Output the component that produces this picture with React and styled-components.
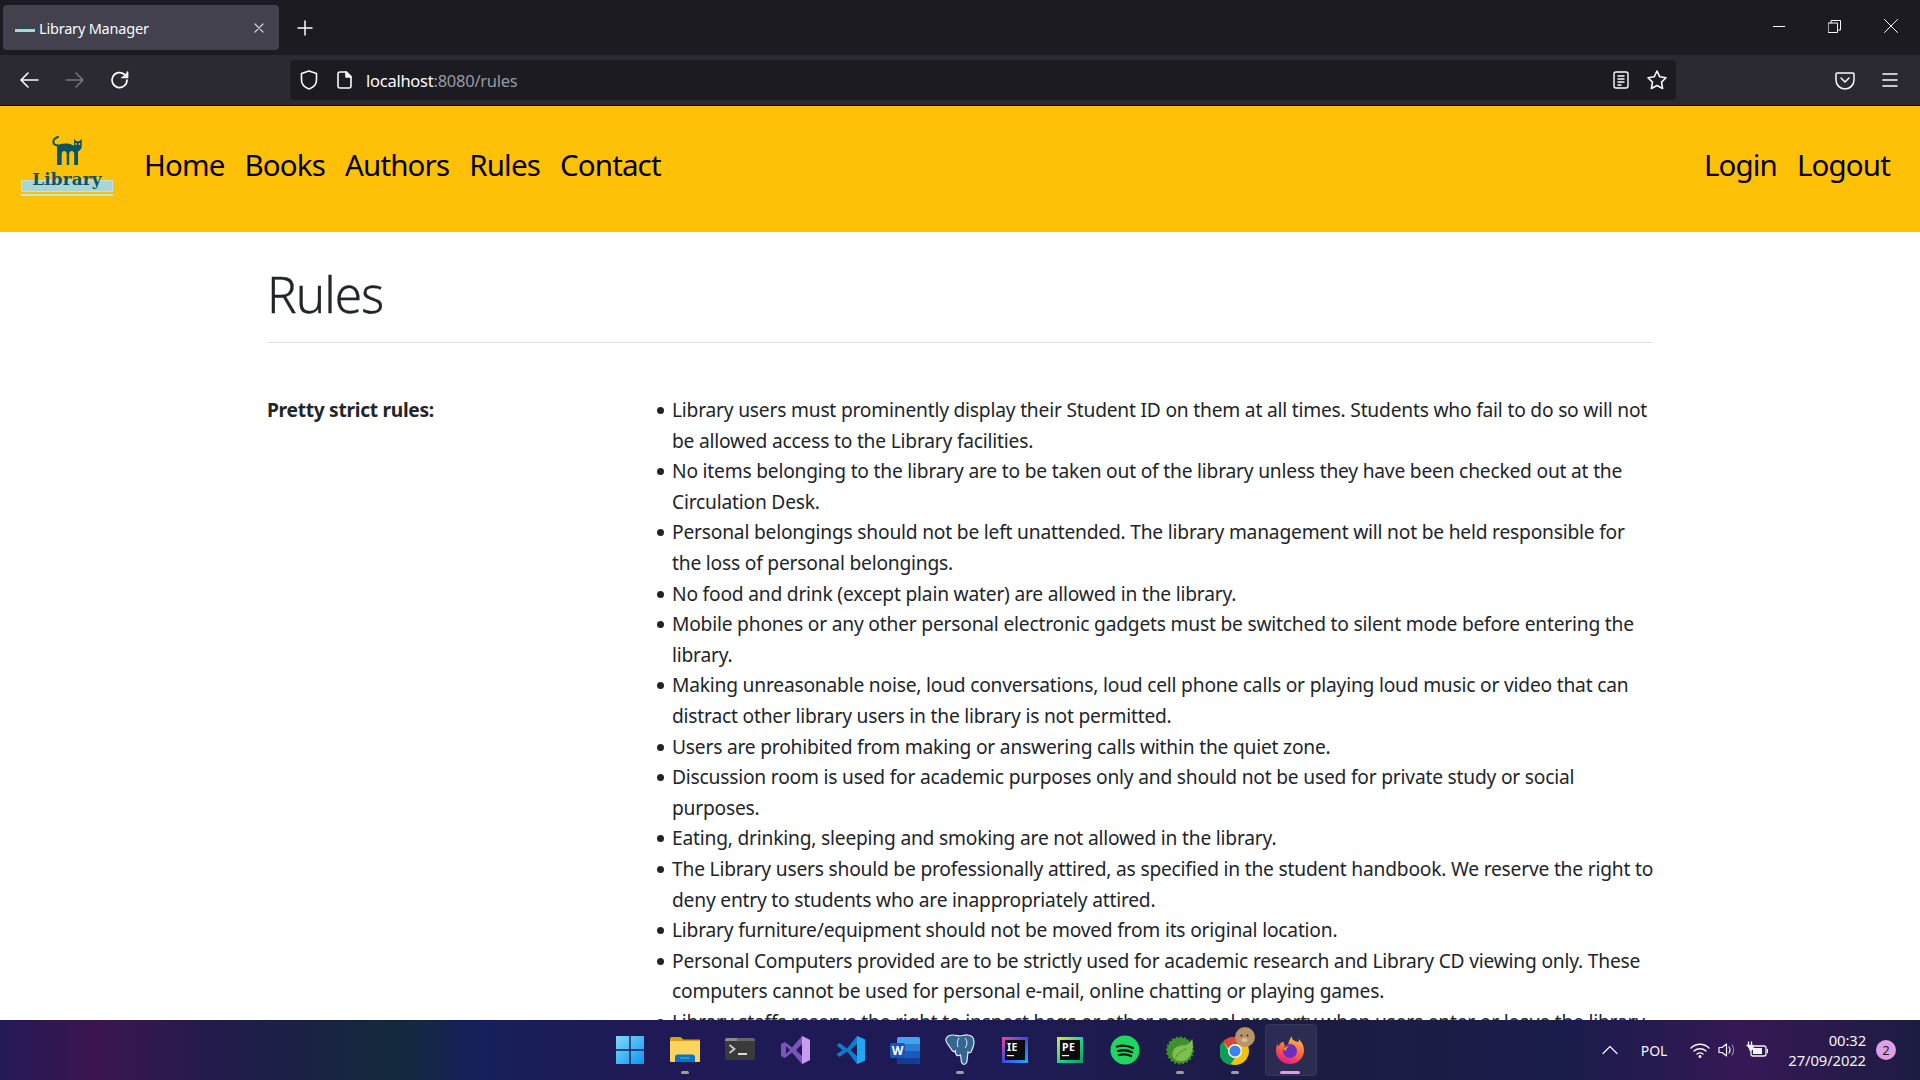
import React from "react";
import styled, { createGlobalStyle } from "styled-components";

const Global = createGlobalStyle`
  html, body { margin: 0; padding: 0; height: 100%; overflow: hidden; background: #fff; }
  * { box-sizing: border-box; }
`;
const UI = `"Noto Sans", "Open Sans", "Liberation Sans", sans-serif`;

const Screen = styled.div`
  width: 1920px; height: 1080px; display: flex; flex-direction: column; overflow: hidden;
  font-family: ${UI};
`;
const TitleBar = styled.div`
  height: 55px; flex: none; background: #1c1b22; display: flex; align-items: flex-start; padding: 5px 0 0 3px;
`;
const Tab = styled.div`
  width: 276px; height: 45px; border-radius: 4px; background: #42414d; color: #fbfbfe;
  display: flex; align-items: center; padding: 0 14px 0 12px; font-size: 14.5px; letter-spacing: -0.2px;
`;
const TabTitle = styled.span` margin-left: 4px; flex: 1; `;
const NewTab = styled.div` margin: 14px 0 0 18px; width: 22px; height: 22px; color: #fbfbfe; `;
const WinButtons = styled.div`
  margin-left: auto; display: flex; align-items: center; height: 42px; padding-right: 22px; gap: 43px; color: #fbfbfe;
`;
const ToolBar = styled.div`
  height: 51px; flex: none; background: #2b2a33; border-bottom: 1px solid #0c0c0d;
  display: flex; align-items: center; padding: 0 21px 0 18px; color: #fbfbfe;
`;
const NavIcons = styled.div` display: flex; align-items: center; gap: 24px; width: 272px; `;
const UrlBar = styled.div`
  width: 1386px; height: 40px; border-radius: 4px; background: #1c1b22; display: flex; align-items: center;
  padding: 0 8px 0 8px; font-size: 16.5px; letter-spacing: -0.25px;
`;
const UrlIcons = styled.div` display: flex; align-items: center; gap: 16px; margin-right: 12px; `;
const UrlText = styled.span` padding-top: 1px; `;
const Host = styled.span` color: #fbfbfe; `;
const UrlRest = styled.span` color: #9a9aa2; `;
const UrlEnd = styled.div` margin-left: auto; display: flex; gap: 16px; align-items: center; `;
const RightIcons = styled.div` margin-left: auto; display: flex; gap: 26px; align-items: center; `;

const Viewport = styled.div` flex: 1; min-height: 0; overflow: hidden; background: #fff; color: #212529; `;
const Nav = styled.nav`
  height: 126px; background: #ffc107; display: flex; align-items: flex-start; padding: 30px 30px 0 21px;
  color: #000;
`;
const Logo = styled.div`
  width: 92px; height: 62px; margin-right: 31px; position: relative; display: flex; flex-direction: column; align-items: center;
`;
const LogoWord = styled.div`
  font-family: "DejaVu Serif", "Liberation Serif", serif; font-weight: 700; font-size: 16.8px; color: #0b5563; line-height: 20px; letter-spacing: 0.2px;
  position: relative; z-index: 1; margin-top: 3px;
`;
const LogoBand = styled.div`
  position: absolute; left: 0; right: 0; top: 44px; height: 12px; background: #aad5d6; border: 1px solid #c3e2e2;
`;
const LogoLine = styled.div`
  position: absolute; left: 0; right: 0; top: 58px; height: 2px; background: #c5e6e6;
`;
const Links = styled.div` display: flex; gap: 20px; font-size: 29.5px; line-height: 40px; letter-spacing: -0.85px; padding-top: 9px; `;
const AuthLinks = styled(Links)` margin-left: auto; `;
const NavLink = styled.span``;

const Container = styled.main` width: 1386px; margin-left: 267px; padding-top: 29px; `;
const Heading = styled.h1`
  margin: 0; font-weight: 300; font-size: 49.5px; line-height: 66px; letter-spacing: -1px; color: #212529;
  -webkit-text-stroke: 0.3px #212529;
`;
const Rule = styled.hr` margin: 15px 0 52px; border: 0; border-top: 1px solid #dfe0e1; `;
const Row = styled.div` display: flex; font-size: 19.2px; line-height: 30.6px; letter-spacing: -0.2px; `;
const Label = styled.div` flex: none; width: 390px; font-weight: 700; letter-spacing: -0.3px; `;
const List = styled.ul` margin: 0; padding: 0 0 0 15px; list-style: none; flex: 1; min-width: 0; `;
const Item = styled.li`
  position: relative; white-space: pre;
  &::before { content: ""; position: absolute; left: -15px; top: 12px; width: 7px; height: 7px; border-radius: 50%; background: #212529; }
`;

const TaskBar = styled.div`
  height: 60px; flex: none; position: relative; display: flex; align-items: center; justify-content: center;
  background: linear-gradient(90deg, #241a55 0%, #3a1550 5%, #201c4a 12%, #122a3c 21%, #16205a 24.500%, #1f1a55 33%, #1d1a55 50%, #1c1c42 70%, #1a1c4c 82%, #361855 91%, #1b1c40 100%);
`;
const Dock = styled.div` display: flex; gap: 25px; margin-left: 0; `;
const DockSlot = styled.div`
  position: relative; width: 30px; height: 30px; display: flex; align-items: center; justify-content: center;
  ${p => p.$active ? `&::before { content: ""; position: absolute; left: -10px; top: -11px; width: 50px; height: 50px; border-radius: 4px; background: rgba(255,255,255,.07); border: 1px solid rgba(255,255,255,.05); }` : ""}
  svg { position: relative; }
`;
const Pip = styled.span`
  position: absolute; left: 50%; bottom: -9px; height: 3px; border-radius: 2px; transform: translateX(-50%);
  width: ${p => p.$active ? "20px" : "8px"}; background: ${p => p.$active ? "#dda0e4" : "#9c9cac"};
`;
const Tray = styled.div`
  position: absolute; right: 0; top: 0; bottom: 0; display: flex; align-items: center; color: #f4f4f8; font-size: 14px; letter-spacing: -0.1px;
`;
const Lang = styled.span` margin: 0 23px 0 22px; `;
const TrayIcons = styled.div` display: flex; align-items: center; gap: 8px; margin-right: 20px; `;
const Clock = styled.div` text-align: right; line-height: 20px; font-size: 14.8px; margin-top: -1px; `;
const Badge = styled.div`
  width: 20px; height: 20px; border-radius: 50%; background: #dda0e4; color: #1c1b22; font-size: 13px; line-height: 20px; text-align: center; margin: 0 24px 0 10px;
`;

const S = ({ w = 20, h = 20, vb = "0 0 20 20", sw = 1.7, color = "currentColor", children }) => (
  <svg width={w} height={h} viewBox={vb} fill="none" stroke={color} strokeWidth={sw} strokeLinecap="round" strokeLinejoin="round">{children}</svg>
);

const Cat = () => (
  <svg width="30" height="30" viewBox="0 0 30 30">
    <path d="M6 1C3 2 1 4 1.500 6.500 2 9 4.500 9.500 6.500 9.500" fill="none" stroke="#0b5563" strokeWidth="2" strokeLinecap="round" />
    <path fill="#0b5563" d="M5 12C5 8 10 7.500 15 7.500c3 0 5 1 7 2.500V3l2.500 2.300h2.700L29.800 3v7c0 3-2 4.500-3.800 5.500V29h-3.800V18c0-4-5-4-5 0v11h-2.500V18c0-4-5-4-5 0v11H5z" />
    <circle cx="24" cy="8" r=".9" fill="#ffc107" /><circle cx="27.500" cy="8" r=".9" fill="#ffc107" />
  </svg>
);

const Win = () => (
  <svg width="30" height="30" viewBox="0 0 30 30">
    <defs><linearGradient id="wg" x1="0" y1="0" x2="1" y2="1"><stop offset="0" stopColor="#7fd8fd" /><stop offset="1" stopColor="#0c97ee" /></linearGradient></defs>
    <path fill="url(#wg)" d="M1 1h13.300v13.300H1zM15.700 1H29v13.300H15.700zM1 15.700h13.300V29H1zM15.700 15.700H29V29H15.700z" />
  </svg>
);
const Folder = () => (
  <svg width="30" height="30" viewBox="0 0 30 30">
    <path fill="#d99e0b" d="M0 3.500A1.500 1.500 0 0 1 1.500 2h9l3 2.500H30V9H0z" />
    <path fill="#fcd45e" d="M0 6h30v20a1 1 0 0 1-1 1H1a1 1 0 0 1-1-1z" />
    <path fill="#0c72c4" d="M5 27v-5a2.500 2.500 0 0 1 2.500-2.500h15A2.500 2.500 0 0 1 25 22v5z" />
    <path fill="#5fb5ee" d="M10 22.500h10v1H10z" />
  </svg>
);
const Term = () => (
  <svg width="30" height="30" viewBox="0 0 30 30">
    <rect y="3" width="30" height="22" rx="2" fill="#3a3a3a" />
    <path fill="#8c8c8c" d="M0 5a2 2 0 0 1 2-2h10v3H0z" /><path fill="#666" d="M12 3h16a2 2 0 0 1 2 2v1H12z" />
    <path d="M4.500 10l5 4-5 4" fill="none" stroke="#ccc" strokeWidth="1.800" /><path fill="#ddd" d="M13 18h9v2h-9z" />
  </svg>
);
const VS = () => (
  <svg width="30" height="30" viewBox="0 0 30 30">
    <path fill="#7a55b8" d="M1 9l4-2 7 5.500L22 1l8 4v20l-8 4-10-11.500L5 23l-4-2z" />
    <path fill="#c69bf0" d="M22 1l8 4v20l-8 4z" />
    <path fill="#1f1a50" d="M6 11v8l4-4zM22 9l-6 6 6 6z" />
  </svg>
);
const VSC = () => (
  <svg width="30" height="30" viewBox="0 0 30 30">
    <path fill="#0e7ccb" d="M1.500 10.500l3-2.500L12 13.500 22 1l8 3.500v21L22 29 12 16.500 4.500 22l-3-2.500L7.500 15z" />
    <path fill="#23a6f0" d="M22 1l8 3.500v21L22 29z" />
    <path fill="#1d1a50" d="M22 9l-6.500 6 6.500 6z" />
  </svg>
);
const Word = () => (
  <svg width="30" height="30" viewBox="0 0 30 30">
    <rect x="7" y="2" width="23" height="27" rx="1.500" fill="#41a5ee" />
    <path fill="#2b7cd3" d="M7 9h23v7H7z" /><path fill="#185abd" d="M7 16h23v7H7z" /><path fill="#103f91" d="M7 23h23v4.500a1.500 1.500 0 0 1-1.500 1.500H8.500A1.500 1.500 0 0 1 7 27.500z" />
    <rect y="8" width="15" height="15" rx="1.500" fill="#1b56b5" />
    <text x="7.500" y="19.500" textAnchor="middle" fontFamily="Noto Sans, sans-serif" fontWeight="700" fontSize="12" fill="#fff">W</text>
  </svg>
);
const Pg = () => (
  <svg width="30" height="32" viewBox="0 0 30 32">
    <path fill="#336791" stroke="#e8eef4" strokeWidth="1.200" d="M8 1c3 0 5 1 7 1s5-1.500 8-1c4 .5 6 3 6 7 0 4-2 8-3 10-.5 1-2 1-3 0l-1 9c-.2 2-2 4-4 3-2-1-2-3-2-6l-.5-3c-2 1-3 1-4 0-1.500-1.500-1-3-1-4-1 1-3 1-5-3C3 10 0 8 1 5c.7-2.500 4-4 7-4z" />
    <path d="M14 4c-2 3-2 6-1 9M20 4c3 3 2 8 0 10" fill="none" stroke="#e8eef4" strokeWidth="1" />
  </svg>
);
const Jet = ({ label, from, mid, to }) => (
  <svg width="30" height="30" viewBox="0 0 30 30">
    <defs><linearGradient id={`j${label}`} x1="0" y1="0" x2="1" y2="1"><stop offset="0" stopColor={from} /><stop offset=".5" stopColor={mid} /><stop offset="1" stopColor={to} /></linearGradient></defs>
    <rect x="2" y="2" width="26" height="26" fill={`url(#j${label})`} />
    <rect x="5" y="5" width="20" height="20" fill="#0b0b0f" />
    <text x="7" y="15.500" fontFamily="Noto Sans, sans-serif" fontWeight="700" fontSize="10.500" fill="#fff" letterSpacing=".4">{label}</text>
    <path fill="#fff" d="M7 20h7v1.200H7z" />
  </svg>
);
const Spotify = () => (
  <svg width="30" height="30" viewBox="0 0 30 30">
    <circle cx="15" cy="15" r="14.500" fill="#1ed760" />
    <path d="M7 11.500c5-1.500 11-1 16 1.500M8 16c4.500-1.200 10-.8 14 1.300M9 20c4-1 8.500-.6 12 1" fill="none" stroke="#111" strokeWidth="2.300" strokeLinecap="round" />
  </svg>
);
const Spring = () => (
  <svg width="32" height="30" viewBox="0 0 32 30">
    <circle cx="16" cy="15.500" r="13.500" fill="#3f8f2c" stroke="#3f8f2c" strokeWidth="3" strokeDasharray="2 2.200" />
    <circle cx="16" cy="15.500" r="13.500" fill="#3f8f2c" />
    <path fill="#7fbe4e" d="M29 3c2.500 10-1 24-12 24-6 0-10-4-9-9 1-6 7-8 12-8 4 0 7-3 9-7z" />
    <path d="M11 23c3-5 8-8 12-9" fill="none" stroke="#3f8f2c" strokeWidth="1" />
  </svg>
);
const Chrome = () => (
  <svg width="38" height="40" viewBox="0 0 38 40" style={{ margin: "-7px -8px 0 0" }}>
    <g transform="translate(0 9)">
      <circle cx="15" cy="15" r="14" fill="#f4c20d" />
      <path fill="#db4437" d="M15 1a14 14 0 0 1 12.100 7H15a7 7 0 0 0-6.500 4.300L3 5.500A14 14 0 0 1 15 1z" />
      <path fill="#0f9d58" d="M3 5.500l6 10.400a7 7 0 0 0 6 6L10 29A14 14 0 0 1 3 5.500z" />
      <circle cx="15" cy="15" r="7" fill="#fff" /><circle cx="15" cy="15" r="5.600" fill="#3b82ea" />
    </g>
    <circle cx="25" cy="10" r="10" fill="#b89568" />
    <circle cx="21.500" cy="8.500" r="1" fill="#3d2c1c" /><circle cx="27.500" cy="8.500" r="1" fill="#3d2c1c" /><ellipse cx="24.500" cy="13" rx="3" ry="2" fill="#d8bf98" />
  </svg>
);
const Firefox = () => (
  <svg width="30" height="30" viewBox="0 0 30 30">
    <defs><linearGradient id="ff" x1="0.7" y1="0" x2="0.3" y2="1"><stop offset="0" stopColor="#ffbd4f" /><stop offset=".45" stopColor="#ff7139" /><stop offset="1" stopColor="#e31587" /></linearGradient></defs>
    <path fill="url(#ff)" d="M15 29C7 29 1 23 1 15.500c0-3 .8-5 1.500-6.500.2 1 .7 1.800 1.500 2.500C4.500 8 7 7 9 7c-.5 2 .3 3.500 2 4 3-1 2-5 6-10-1 4 3 5 6 6 1 .3 1-1 .5-3 3 2.500 5.500 6.500 5.500 11.500C29 23 23 29 15 29z" />
    <circle cx="15" cy="16" r="7" fill="#6a2fc0" /><path fill="#ff980e" d="M8 14c2-2 4-2.500 6-2.500-2 1-3 2.500-3 4.500z" />
  </svg>
);

const dock = [
  { el: <Win /> }, { el: <Folder />, pip: 1 }, { el: <Term /> }, { el: <VS /> }, { el: <VSC /> }, { el: <Word /> },
  { el: <Pg />, pip: 1 }, { el: <Jet label="IE" from="#ff3fa0" mid="#3a4ce0" to="#19b4f0" /> },
  { el: <Jet label="PE" from="#f2e22c" mid="#21d789" to="#0c9a5f" /> }, { el: <Spotify /> }, { el: <Spring />, pip: 1 },
  { el: <Chrome />, pip: 1 }, { el: <Firefox />, active: 1 },
];

const rules = [
  "Library users must prominently display their Student ID on them at all times. Students who fail to do so will not\nbe allowed access to the Library facilities.",
  "No items belonging to the library are to be taken out of the library unless they have been checked out at the\nCirculation Desk.",
  "Personal belongings should not be left unattended. The library management will not be held responsible for\nthe loss of personal belongings.",
  "No food and drink (except plain water) are allowed in the library.",
  "Mobile phones or any other personal electronic gadgets must be switched to silent mode before entering the\nlibrary.",
  "Making unreasonable noise, loud conversations, loud cell phone calls or playing loud music or video that can\ndistract other library users in the library is not permitted.",
  "Users are prohibited from making or answering calls within the quiet zone.",
  "Discussion room is used for academic purposes only and should not be used for private study or social\npurposes.",
  "Eating, drinking, sleeping and smoking are not allowed in the library.",
  "The Library users should be professionally attired, as specified in the student handbook. We reserve the right to\ndeny entry to students who are inappropriately attired.",
  "Library furniture/equipment should not be moved from its original location.",
  "Personal Computers provided are to be strictly used for academic research and Library CD viewing only. These\ncomputers cannot be used for personal e-mail, online chatting or playing games.",
  "Library staffs reserve the right to inspect bags or other personal property when users enter or leave the library.",
];

export default function App() {
  return (
    <Screen>
      <Global />
      <TitleBar>
        <Tab>
          <svg width="20" height="10" viewBox="0 0 20 10"><path fill="#0b5563" d="M8 0h3v5H8z" /><path fill="#aad5d6" d="M0 6h20v3H0z" /></svg>
          <TabTitle>Library Manager</TabTitle>
          <S w={12} h={12} vb="0 0 12 12" sw={1.2} color="#cfcfd8"><path d="M2 2l8 8M10 2l-8 8" /></S>
        </Tab>
        <NewTab><S w={16} h={16} vb="0 0 16 16" sw={1.5}><path d="M8 1v14M1 8h14" /></S></NewTab>
        <WinButtons>
          <S w={12} h={12} vb="0 0 12 12" sw={1}><path d="M0 6.500h12" /></S>
          <S w={13} h={13} vb="0 0 13 13" sw={1}><rect x=".5" y="3" width="9" height="9.500" /><path d="M3 3V.5h9.500V10H10" /></S>
          <S w={14} h={14} vb="0 0 14 14" sw={1}><path d="M.5.5l13 13M13.500.5l-13 13" /></S>
        </WinButtons>
      </TitleBar>
      <ToolBar>
        <NavIcons>
          <S w={22} h={22} vb="0 0 22 22" sw={1.6}><path d="M20 11H3M10 4l-7 7 7 7" /></S>
          <S w={22} h={22} vb="0 0 22 22" sw={1.6} color="#76757c"><path d="M2 11h17M12 4l7 7-7 7" /></S>
          <S w={20} h={20} vb="0 0 20 20" sw={1.7}><path d="M17 10a7.500 7.500 0 1 1-2.500-5.500L17 7" /><path d="M17.500 2v5.500H12" fill="currentColor" /></S>
        </NavIcons>
        <UrlBar>
          <UrlIcons>
            <S w={22} h={22} vb="0 0 22 22" sw={1.6}><path d="M11 2l7.500 2.500V11c0 4.500-3.500 7.500-7.500 9-4-1.500-7.500-4.500-7.500-9V4.500z" /></S>
            <S w={18} h={20} vb="0 0 18 20" sw={1.6}><path d="M4 2h6.500L15 6.500V16a2 2 0 0 1-2 2H4a2 2 0 0 1-2-2V4a2 2 0 0 1 2-2z" /><path d="M10 2v5h5" fill="currentColor" /></S>
          </UrlIcons>
          <UrlText><Host>localhost</Host><UrlRest>:8080/rules</UrlRest></UrlText>
          <UrlEnd>
            <S w={18} h={20} vb="0 0 18 20" sw={1.4}><rect x="2" y="2" width="14" height="16" rx="2" /><path d="M6 6h6M6 9h6M6 12h6M6 15h3" /></S>
            <S w={22} h={22} vb="0 0 22 22" sw={1.6}><path d="M11 2l2.800 5.800 6.200.9-4.500 4.400 1.100 6.400-5.600-3-5.600 3 1.100-6.400L2 8.700l6.200-.9z" /></S>
          </UrlEnd>
        </UrlBar>
        <RightIcons>
          <S w={20} h={20} vb="0 0 20 20" sw={1.5}><path d="M2 3h16a1 1 0 0 1 1 1v6a9 9 0 0 1-18 0V4a1 1 0 0 1 1-1z" /><path d="M6 8l4 4 4-4" /></S>
          <S w={18} h={18} vb="0 0 18 18" sw={1.6}><path d="M2 3h14M2 9h14M2 15h14" /></S>
        </RightIcons>
      </ToolBar>
      <Viewport>
        <Nav>
          <Logo>
            <Cat />
            <LogoBand /><LogoLine />
            <LogoWord>Library</LogoWord>
          </Logo>
          <Links>
            <NavLink>Home</NavLink><NavLink>Books</NavLink><NavLink>Authors</NavLink><NavLink>Rules</NavLink><NavLink>Contact</NavLink>
          </Links>
          <AuthLinks><NavLink>Login</NavLink><NavLink>Logout</NavLink></AuthLinks>
        </Nav>
        <Container>
          <Heading>Rules</Heading>
          <Rule />
          <Row>
            <Label>Pretty strict rules:</Label>
            <List>{rules.map((r) => <Item key={r}>{r}</Item>)}</List>
          </Row>
        </Container>
      </Viewport>
      <TaskBar>
        <Dock>
          {dock.map((d, i) => (
            <DockSlot key={i} $active={d.active}>{d.el}{(d.pip || d.active) ? <Pip $active={d.active} /> : null}</DockSlot>
          ))}
        </Dock>
        <Tray>
          <S w={18} h={18} vb="0 0 18 18" sw={1.2}><path d="M2 12.500l7-7 7 7" /></S>
          <Lang>POL</Lang>
          <TrayIcons>
            <S w={20} h={18} vb="0 0 20 18" sw={1.4}><path d="M1 7c5-5 13-5 18 0M4 10c3.500-3 8.500-3 12 0M7 13c2-1.500 4-1.500 6 0" /><circle cx="10" cy="15.500" r=".8" fill="currentColor" /></S>
            <S w={20} h={18} vb="0 0 20 18" sw={1.2}><path d="M1 6.500h3L8.500 3v12L4 11.500H1zM11 6c1.300 1.800 1.300 4.200 0 6" /><path d="M14 4c2 3 2 7 0 10" stroke="#8b8b9b" /></S>
            <S w={22} h={18} vb="0 0 22 18" sw={1.3}><path d="M2.500 1v3M5.500 1v3" /><path d="M1 4.500h6V8L4 9.500" fill="currentColor" /><rect x="5" y="5" width="15" height="10" rx="2" /><rect x="7" y="7" width="9" height="6" fill="currentColor" stroke="none" /><path d="M21.500 8.500v3" /></S>
          </TrayIcons>
          <Clock>00:32<br />27/09/2022</Clock>
          <Badge>2</Badge>
        </Tray>
      </TaskBar>
    </Screen>
  );
}
